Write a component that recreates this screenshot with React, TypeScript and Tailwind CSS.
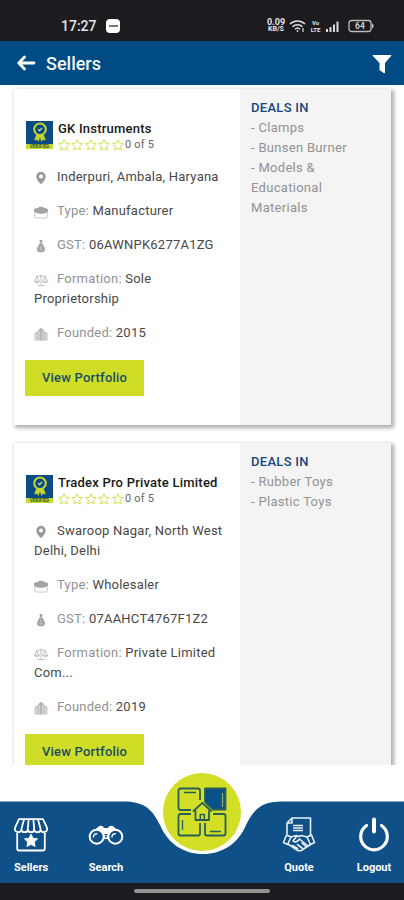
import type { ReactNode } from "react";

type Seller = {
  name: string;
  location: string;
  type: string;
  gst: string;
  formation: string;
  founded: string;
  deals: string[];
};

const sellers: Seller[] = [
  {
    name: "GK Instruments",
    location: "Inderpuri, Ambala, Haryana",
    type: "Manufacturer",
    gst: "06AWNPK6277A1ZG",
    formation: "Sole Proprietorship",
    founded: "2015",
    deals: ["Clamps", "Bunsen Burner", "Models & Educational Materials"],
  },
  {
    name: "Tradex Pro Private Limited",
    location: "Swaroop Nagar, North West Delhi, Delhi",
    type: "Wholesaler",
    gst: "07AAHCT4767F1Z2",
    formation: "Private Limited Com...",
    founded: "2019",
    deals: ["Rubber Toys", "Plastic Toys"],
  },
];

function PinIcon() {
  return (
    <svg viewBox="0 0 14 14" className="h-3.5 w-3.5" fill="#999">
      <path
        fillRule="evenodd"
        d="M7 .8a4.7 4.7 0 0 0-4.7 4.7C2.3 9 7 13.2 7 13.2S11.7 9 11.7 5.5A4.7 4.7 0 0 0 7 .8Zm0 2.8a2 2 0 1 1 0 4 2 2 0 0 1 0-4Z"
      />
    </svg>
  );
}

function BriefcaseIcon() {
  return (
    <svg viewBox="0 0 14 14" className="h-3.5 w-3.5" fill="#a3a3a3">
      <path d="M0 4.2 2.5 3h1.800L5 1.700h4L9.700 3h1.800L14 4.200v2.800C10 9.400 4 9.400 0 7Z" />
      <path d="M.7 8v3.800c0 .8.500 1.200 1.300 1.200h10c.8 0 1.300-.4 1.300-1.200V8" fill="none" stroke="#c4c4c4" strokeWidth=".9" />
    </svg>
  );
}

function MoneyBagIcon() {
  return (
    <svg viewBox="0 0 14 14" className="h-3.5 w-3.5">
      <path d="M5.500 1h3L8 3.700l2.200 4c1.500 2.700.6 5.500-1.700 5.500h-3c-2.300 0-3.200-2.800-1.700-5.500l2.200-4Z" fill="#a3a3a3" />
      <path d="M5.700 4.500h2.600M8.300 8c-1.800-1-2.900.8-1.300 1.300 1.800.6.700 2.600-1.300 1.500" fill="none" stroke="#ddd" strokeWidth=".7" />
    </svg>
  );
}

function ScaleIcon() {
  return (
    <svg viewBox="0 0 14 14" className="h-3.5 w-3.5" fill="none" stroke="#b5b5b5" strokeWidth=".9">
      <path d="M7 1.500v10M3.500 12.500h7M2 3.700c2-1.400 3 .2 5-.7 2 .9 3-.7 5 .7M2.800 4 .5 8.300h4.700L2.800 4Zm8.400 0L8.800 8.300h4.700L11.200 4Z" />
      <path d="M.5 8.300c.5 2 4.200 2 4.700 0M8.800 8.300c.5 2 4.200 2 4.700 0" />
    </svg>
  );
}

function BuildingIcon() {
  return (
    <svg viewBox="0 0 14 14" className="h-3.5 w-3.5">
      <path d="M.5 13.500V6L4 4v9.500ZM10 13.500V4l3.500 2v7.500Z" fill="#c4c4c4" />
      <path d="M4.300 13.500V3L7 .8 9.700 3v10.500Z" fill="#b0b0b0" />
      <path d="M5.700 4v9M8.300 4v9M2.200 6.500V13M11.800 6.500V13" stroke="#eee" strokeWidth=".7" />
    </svg>
  );
}

function VerifiedBadge() {
  return (
    <svg viewBox="0 0 27 28" className="h-7 w-[27px] shrink-0">
      <path d="M0 0h27v28H0Z" fill="#0b4a85" />
      <path d="M0 23h27v5H0Z" fill="#c3d92b" />
      <path d="M11 13 8.500 19l2.700-.6 1.200 2 1.600-5 1.600 5 1.200-2 2.700.6L17 13" fill="#c3d92b" stroke="#c3d92b" strokeWidth=".6" />
      <circle cx="14" cy="8.300" r="5.800" fill="#0b4a85" stroke="#c3d92b" strokeWidth="2" />
      <path d="m12 8.300 1.500 1.400 2.600-2.800" fill="none" stroke="#d9e89a" strokeWidth="1.200" />
      <text x="13.500" y="27" fontSize="4.500" fontWeight="700" textAnchor="middle" fill="#31582c">
        VERIFIED
      </text>
    </svg>
  );
}

function Stars() {
  return (
    <div className="flex">
      {[0, 1, 2, 3, 4].map((i) => (
        <svg key={i} viewBox="0 0 13.400 13" className="h-[13px] w-[13.4px]">
          <path
            d="m6 .8 1.600 3.300 3.700.500-2.700 2.600.7 3.800L6 9.200l-3.300 1.800.7-3.800L.7 4.600l3.700-.5Z"
            fill="none"
            stroke="#d0e24c"
            strokeWidth="1"
          />
        </svg>
      ))}
    </div>
  );
}

type DetailProps = { icon: ReactNode; label?: string; children: ReactNode };

function Detail({ icon, label, children }: DetailProps) {
  return (
    <p className="mb-3.5 pr-3 pl-5 tracking-[0.23px]">
      <span className="mr-[9px] inline-block translate-y-0.5 align-[-2px]">{icon}</span>
      {label && <span className="text-[#929292]">{label}: </span>}
      {children}
    </p>
  );
}

function SellerCard({ seller }: { seller: Seller }) {
  return (
    <div className="flex h-[336px] shrink-0 bg-white shadow-[2px_2px_4px_1px_rgba(0,0,0,0.32)]">
      <div className="w-[226px] text-[13px] leading-5 text-[#484848]">
        <div className="flex gap-[5px] pt-8 pl-3">
          <VerifiedBadge />
          <div className="whitespace-nowrap">
            <h2 className="h-4 text-[13px] leading-4 font-medium tracking-[0.22px] text-[#181818]">{seller.name}</h2>
            <div className="flex h-4 items-center text-[11px] tracking-[0.2px] text-[#666]">
              <Stars />
              <span>0 of 5</span>
            </div>
          </div>
        </div>
        <div className="pt-3.5">
          <Detail icon={<PinIcon />}>{seller.location}</Detail>
          <Detail icon={<BriefcaseIcon />} label="Type">{seller.type}</Detail>
          <Detail icon={<MoneyBagIcon />} label="GST">{seller.gst}</Detail>
          <Detail icon={<ScaleIcon />} label="Formation">{seller.formation}</Detail>
          <Detail icon={<BuildingIcon />} label="Founded">{seller.founded}</Detail>
        </div>
        <button className="mt-[3px] ml-[11px] h-9 w-[119px] bg-[#cfdd27] text-[13px] font-medium tracking-[0.2px] text-[#174f61]">
          View Portfolio
        </button>
      </div>
      <div className="w-[151px] bg-[#f4f4f4] pt-[9px] pr-6 pl-[11px] text-[13px] leading-5 tracking-[0.3px] text-[#929292]">
        <h3 className="font-medium text-[#17477f]">DEALS IN</h3>
        {seller.deals.map((deal) => (
          <p key={deal}>- {deal}</p>
        ))}
      </div>
    </div>
  );
}

function StatusBar() {
  return (
    <div className="flex h-[41px] shrink-0 items-end bg-[#1c1b1f] pb-2 pl-[61px] text-[#e5e5e5]">
      <span className="w-[45px] text-[14px] leading-[14px] font-medium">17:27</span>
      <div className="flex h-3.5 w-3.5 items-center justify-center rounded bg-white">
        <div className="h-0.5 w-[9px] bg-[#777]" />
      </div>
      <div className="ml-[146px] flex w-5 flex-col items-center text-[9px] leading-[7px] font-bold">
        <span>0.09</span>
        <span className="text-[7px]">KB/S</span>
      </div>
      <svg viewBox="0 0 17 14" className="ml-[3px] h-3.5 w-[17px]" fill="none" stroke="#ddd" strokeWidth="1.500">
        <path d="M1 5c4.300-4 10.700-4 15 0M3.500 7.700c2.800-2.700 7.200-2.700 10 0M6 10.200c1.400-1.400 3.600-1.400 5 0" />
        <circle cx="8.500" cy="12" r=".9" fill="#ddd" stroke="none" />
        <path d="M14 9v4" strokeWidth="1.200" />
      </svg>
      <div className="ml-[5px] flex w-[9px] flex-col items-center text-[6px] leading-[6.500px] font-bold">
        <span>Vo</span>
        <span>LTE</span>
      </div>
      <svg viewBox="0 0 14 14" className="ml-[6px] h-3.5 w-3.5" fill="#ddd">
        <path d="M0 10h2v3H0ZM3.500 8h2v5h-2ZM7 5.500h2V13H7ZM10.500 2.500h2V13h-2Z" />
      </svg>
      <svg viewBox="0 0 27 14" className="ml-[8px] h-3.5 w-[27px]">
        <rect x="1" y="1.500" width="22" height="11" rx="2.500" fill="none" stroke="#bbb" strokeWidth="1.300" />
        <path d="M24 4.500c2.200.5 2.200 4.500 0 5Z" fill="#bbb" />
        <text x="12" y="10" fontSize="8.500" fontWeight="700" textAnchor="middle" fill="#ccc">64</text>
      </svg>
    </div>
  );
}

function Header() {
  return (
    <header className="flex h-11 shrink-0 items-center bg-[#004b83] pr-[12px] pl-[17px]">
      <svg viewBox="0 0 19 18" className="h-[18px] w-[19px]" fill="none" stroke="#fff" strokeWidth="2.800" strokeLinecap="round" strokeLinejoin="round">
        <path d="M17 9H2M7.500 3 1.800 9l5.700 6" />
      </svg>
      <h1 className="ml-[10px] text-[18px] font-medium text-[#f3f7fb]">Sellers</h1>
      <svg viewBox="0 0 20 20" className="mt-[2px] ml-auto h-5 w-5" fill="#fff">
        <path d="M1.300 1h17.400c.7 0 .8.700.4 1.100L13 9v9.400c0 .8-.8 1-1.400.6L7.500 16V9L.9 2.100C.5 1.700.6 1 1.300 1Z" />
      </svg>
    </header>
  );
}

function StoreIcon() {
  return (
    <svg viewBox="0 0 36 34" className="h-[34px] w-9" fill="none" stroke="#fff" strokeWidth="1.800" strokeLinejoin="round">
      <path d="M6 1.200h24l4.200 9c0 5-6.600 5-6.600 1 0 4-6.400 4-6.400 0 0 4-6.400 4-6.400 0 0 4-6.400 4-6.400 0 0 4-6.600 4-6.600-1ZM11 1.500 8.400 11M15.600 1.500l-.8 9.500M20.400 1.500l.8 9.500M25 1.500l2.600 9.500M4.200 14v16.500c0 1.300.8 2 2 2h23.600c1.200 0 2-.7 2-2V14" />
      <path d="m18 16 2 4.200 4.600.6-3.300 3.200.8 4.600-4.100-2.200-4.100 2.200.8-4.600-3.300-3.200 4.600-.6Z" fill="#fff" strokeWidth=".8" />
    </svg>
  );
}

function BinocularsIcon() {
  return (
    <svg viewBox="0 0 36 34" className="h-[34px] w-9">
      <path d="M2 16 10 9c2-2 5-1.500 6 1h4c1-2.500 4-3 6-1l8 7-8 2-6-2h-4l-6 2Z" fill="#fff" />
      <path d="M15 17h6v4h-6Z" fill="#fff" />
      <circle cx="8.700" cy="18.700" r="7" fill="#0f5089" stroke="#fff" strokeWidth="2" />
      <circle cx="27.300" cy="18.700" r="7" fill="#0f5089" stroke="#fff" strokeWidth="2" />
      <path d="M5.500 19c0-2 1.300-3.300 3.300-3.300M24 19c0-2 1.300-3.300 3.300-3.300" fill="none" stroke="#fff" strokeWidth="1.400" strokeLinecap="round" />
      <circle cx="18" cy="18.500" r="1.100" fill="#0f5089" />
    </svg>
  );
}

function HandshakeIcon() {
  return (
    <svg viewBox="0 0 34 36" className="h-9 w-[34px]" fill="none" stroke="#e8eff6" strokeWidth="1.600" strokeLinejoin="round" strokeLinecap="round">
      <path d="M5 17V6l5-5h18.500v17M5 6h5V1" />
      <path d="M11.500 8.500h9M11.500 11h9M11.500 13.500h9" strokeWidth="1.300" />
      <path d="m4.500 18 4.500 2-3.500 7.500-4-2ZM29.500 18 25 20l3.500 7.500 4-2Z" />
      <path d="m9 20 5.500-1.500 2.500 1 2.500-1L25 20M15 19l-4 5c2 1.800 4.500.7 6.500-2l8.500 7M6 27l9 6c2 1.200 3 1.200 5 0l8.500-5.500M15.500 31.500l-5-3M20 31l-4.500-3.500M24 29.500l-4-3.500" />
    </svg>
  );
}

function PowerIcon() {
  return (
    <svg viewBox="0 0 34 36" className="h-9 w-[34px]" fill="none" stroke="#fff" strokeWidth="3.200" strokeLinecap="round">
      <path d="M17 2.500v12" strokeWidth="4" />
      <path d="M9.500 8.500a13.300 13.300 0 1 0 15 0" />
    </svg>
  );
}

function HomeIcon() {
  return (
    <svg viewBox="0 0 50 50" className="h-[50px] w-[50px]" fill="none" stroke="#285f58" strokeWidth="1.800" strokeLinejoin="round">
      <path d="M14 23H3.500C2 23 1.500 22 1.500 21V3.500C1.500 2 2.500 1.500 3.500 1.500H21C22 1.500 23 2 23 3.500V13" />
      <path d="M28 1.500h20.500V22.500H36L28 15Z" fill="#0b5189" />
      <path d="M14 27H3.500c-1.500 0-2 1-2 2v17.500c0 1.500 1 2 2 2H21c1 0 2-.5 2-2V36M36 27h10.500c1.500 0 2 1 2 2v17.500c0 1.500-1 2-2 2H30c-1.500 0-2-.5-2-2V36" />
      <path d="M7 5.500h12M5.500 33v10M33 44.500h11" strokeWidth="1.300" />
      <path d="M45.500 6v14" stroke="#8fa96a" strokeWidth="1.300" />
      <path d="M18.500 23.500V33h13.500v-9.500M16 24.500l9.300-8.700 9.300 8.700" />
      <path d="M23.300 33v-5.500h4V33" strokeWidth="1.500" />
    </svg>
  );
}

function NavItem({ label, icon, className }: { label: string; icon: ReactNode; className: string }) {
  return (
    <button className={`flex h-[59px] flex-col items-center justify-between text-[11px] leading-4 font-bold text-white ${className}`}>
      <span className="flex h-9 items-center">{icon}</span>
      <span>{label}</span>
    </button>
  );
}

function BottomNav() {
  return (
    <nav className="relative h-[118px] shrink-0 bg-white">
      <svg viewBox="0 0 404 118" className="absolute inset-0 h-[118px] w-[404px]">
        <path
          d="M0 36.500H124C146 36.500 153 46 160 60C168 79 184 89 203 89C222 89 238 79 246 60C253 46 260 36.500 282 36.500H404V118H0Z"
          fill="#0f5089"
        />
      </svg>
      <div className="relative flex h-full items-end pb-[7px]">
        <NavItem label="Sellers" icon={<StoreIcon />} className="ml-[6px] w-[50px]" />
        <NavItem label="Search" icon={<BinocularsIcon />} className="ml-[25px] w-[50px]" />
        <button className="mb-[25px] ml-[32px] flex h-[78px] w-[78px] items-center justify-center rounded-full bg-[#d3de27]">
          <HomeIcon />
        </button>
        <NavItem label="Quote" icon={<HandshakeIcon />} className="ml-[33px] w-[50px]" />
        <NavItem label="Logout" icon={<PowerIcon />} className="ml-[25px] w-[50px]" />
      </div>
    </nav>
  );
}

export default function App() {
  return (
    <div className="flex h-[900px] w-[404px] flex-col overflow-hidden bg-white font-[Roboto,sans-serif]">
      <StatusBar />
      <Header />
      <main className="flex h-[680px] shrink-0 flex-col gap-[18px] overflow-hidden pt-1 pr-[13px] pl-[14px]">
        {sellers.map((seller) => (
          <SellerCard key={seller.name} seller={seller} />
        ))}
      </main>
      <BottomNav />
      <div className="flex h-[17px] shrink-0 justify-center bg-[#1c1b1f] pt-[6px]">
        <div className="h-1 w-[136px] rounded-full bg-[#929292]" />
      </div>
    </div>
  );
}
